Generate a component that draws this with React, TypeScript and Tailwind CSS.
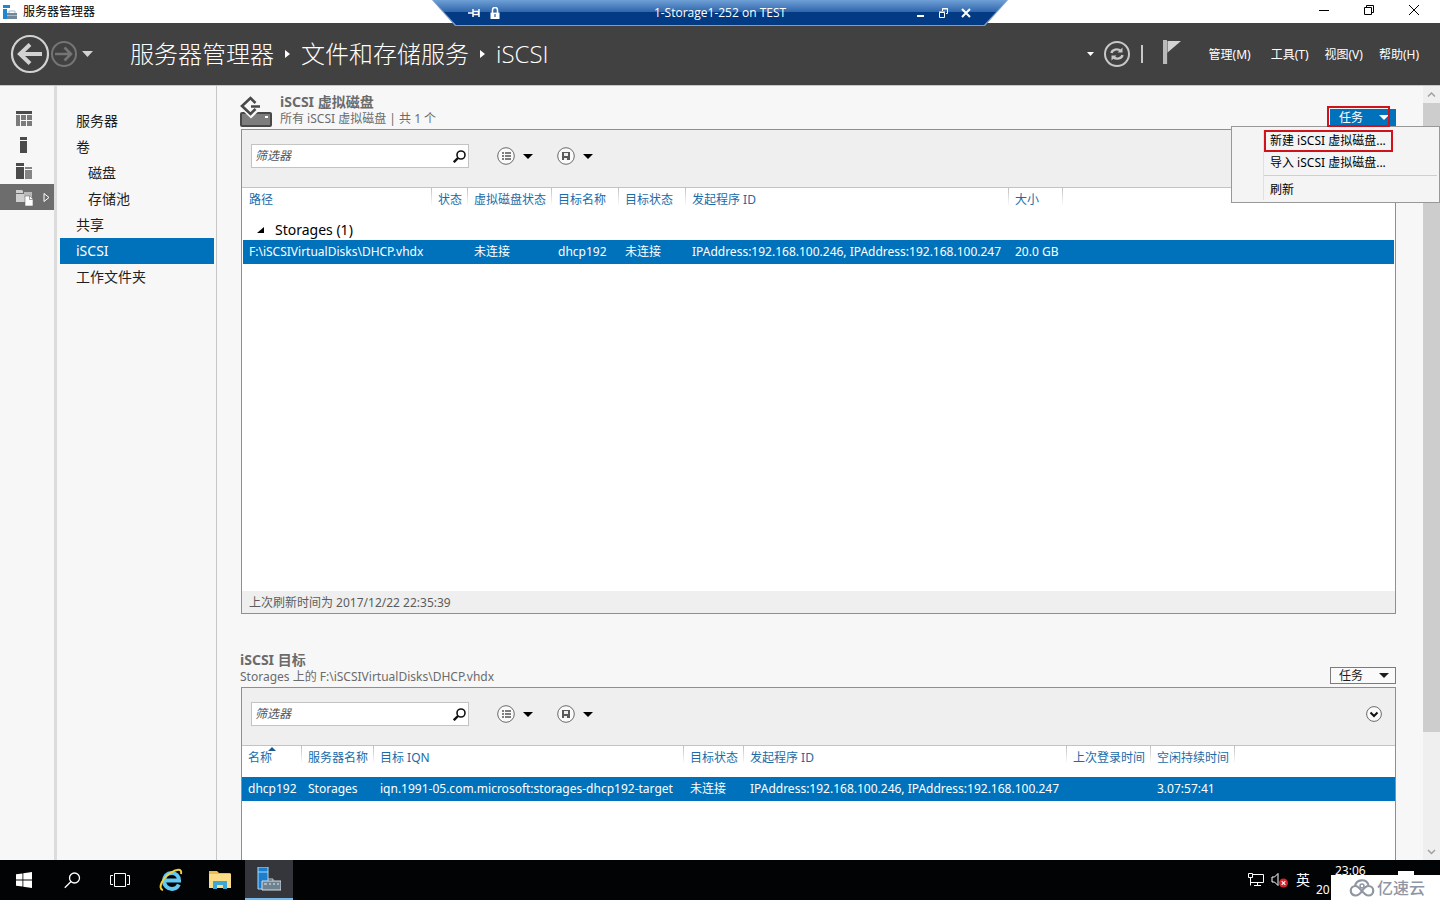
import type { ReactNode } from "react";

const FONT = "font-['Noto_Sans','Noto_Sans_CJK_SC',sans-serif]";
const LIGHT_FONT = "font-['Open_Sans','Noto_Sans_CJK_SC',sans-serif]";

function ServerGlyph({ className }: { className: string }) {
  return (
    <svg viewBox="0 0 24 24" className={className} aria-hidden="true">
      <path d="M1 0h10v22H1z" fill="#1b7fd0" stroke="#a9d8fa" />
      <path d="M1 5h10" stroke="#a9d8fa" />
      <path d="M11 12h5v3" fill="none" stroke="#c9d3da" />
      <path d="M5 14h19v9H5z" fill="#6f8291" stroke="#d5dde3" />
      <path d="M7 17h3M12 17h2M16 17h2M20 17h2" stroke="#e8eef2" />
    </svg>
  );
}

function TitleBar() {
  return (
    <div className="flex h-[23px] shrink-0 items-center bg-white pl-[3px] text-black">
      <svg viewBox="0 0 14 14" className="size-[14px]" aria-hidden="true">
        <path d="M0 0h7v3H0zM0 4h4v10H0z" fill="#1e86d2" />
        <path d="M4 8h10v6H4z" fill="#71889a" />
        <path d="M6 8V6h6v2M4 10.5h10" fill="none" stroke="#a9bac7" />
      </svg>
      <h1 className="ml-[6px] grow text-xs leading-4">服务器管理器</h1>
      <div className="mr-1 flex pb-1">
        <button aria-label="最小化" className="flex h-[19px] w-[45px] items-center justify-center">
          <svg viewBox="0 0 12 12" className="size-3"><path d="M1 6.500h10" stroke="#000" /></svg>
        </button>
        <button aria-label="还原" className="flex h-[19px] w-[45px] items-center justify-center">
          <svg viewBox="0 0 12 12" className="size-3" fill="none" stroke="#000">
            <path d="M1.500 3.500h7v7h-7zM3.500 3.500v-2h7v7h-2" />
          </svg>
        </button>
        <button aria-label="关闭" className="flex h-[19px] w-[45px] items-center justify-center">
          <svg viewBox="0 0 12 12" className="size-3"><path d="M1 1l10 10M11 1L1 11" stroke="#000" /></svg>
        </button>
      </div>
    </div>
  );
}

function ConnectionBar() {
  return (
    <div className="absolute top-0 left-1/2 z-20 h-[26px] w-[576px] -translate-x-1/2 bg-[#7d9cc9] pb-px [clip-path:polygon(0_0,100%_0,553px_100%,23px_100%)]">
      <div className="flex h-[25px] items-center bg-[linear-gradient(#6f9fd6,#2f66ab_12px,#023a83_12px,#023a83)] px-9 text-white [clip-path:polygon(1px_0,575px_0,552px_100%,24px_100%)]">
        <div className="flex w-20 items-center gap-[10px]">
          <button aria-label="固定">
            <svg viewBox="0 0 12 12" className="size-3" fill="none" stroke="#fff" strokeWidth="1.500">
              <path d="M0 6h5M5 2v8M5 4.500h5.500v3H5M11 2v8" />
            </svg>
          </button>
          <svg viewBox="0 0 10 12" className="h-3 w-[10px]" aria-hidden="true">
            <path d="M2.500 6V3a2.500 2.500 0 015 0v3" fill="none" stroke="#fff" strokeWidth="1.500" />
            <path d="M.5 5.500h9V12h-9z" fill="#fff" />
            <path d="M4.500 7h1v3h-1z" fill="#023a83" />
          </svg>
        </div>
        <p className={`grow text-center text-xs leading-4 ${LIGHT_FONT}`}>1-Storage1-252 on TEST</p>
        <div className="flex w-20 items-center justify-end gap-[11px]">
          <button aria-label="最小化连接">
            <svg viewBox="0 0 12 12" className="size-3"><path d="M3 9h7" stroke="#fff" strokeWidth="2" /></svg>
          </button>
          <button aria-label="还原连接">
            <svg viewBox="0 0 12 12" className="size-3" fill="none" stroke="#fff">
              <path d="M2.500 5.500h5v5h-5zM2 5h6M5.500 4V1.500h5v5H9M5 2h6" />
            </svg>
          </button>
          <button aria-label="断开连接">
            <svg viewBox="0 0 12 12" className="size-3"><path d="M2 2l8 8M10 2l-8 8" stroke="#fff" strokeWidth="2" /></svg>
          </button>
        </div>
      </div>
    </div>
  );
}

function Crumb() {
  return (
    <svg viewBox="0 0 5 8" className="h-2 w-[5px]" aria-hidden="true"><path d="M0 0l5 4-5 4z" fill="#fff" /></svg>
  );
}

function Header() {
  return (
    <header className="flex h-[62px] shrink-0 items-center bg-[#414141] pr-[21px] pl-[10px] text-white">
      <button aria-label="后退">
        <svg viewBox="0 0 40 40" className="size-10" fill="none" stroke="#d2d2d2">
          <circle cx="20" cy="20" r="18" strokeWidth="2.200" />
          <path d="M32 20H10M20 10.500L10 20l10 9.500" strokeWidth="4" />
        </svg>
      </button>
      <button aria-label="前进">
        <svg viewBox="0 0 28 28" className="size-7" fill="none" stroke="#757575">
          <circle cx="14" cy="14" r="12" strokeWidth="2" />
          <path d="M5 14h16M14.500 7.500L21 14l-6.500 6.500" strokeWidth="2.600" />
        </svg>
      </button>
      <button aria-label="历史记录" className="ml-1">
        <svg viewBox="0 0 12 6" className="h-[6px] w-3"><path d="M0 0h11L5.500 6z" fill="#d2d2d2" /></svg>
      </button>
      <nav aria-label="路径" className={`ml-9 flex grow items-center gap-[11px] text-2xl leading-8 font-light ${LIGHT_FONT}`}>
        <a href="#manager">服务器管理器</a>
        <Crumb />
        <a href="#files">文件和存储服务</a>
        <Crumb />
        <a href="#iscsi">iSCSI</a>
      </nav>
      <button aria-label="刷新选项">
        <svg viewBox="0 0 8 4" className="h-1 w-2"><path d="M0 0h7L3.500 4z" fill="#fff" /></svg>
      </button>
      <button aria-label="刷新" className="ml-2">
        <svg viewBox="0 0 28 28" className="size-7" fill="none" stroke="#c8c8c8">
          <circle cx="14" cy="14" r="12" strokeWidth="2" />
          <path d="M8.500 13c.5-3.500 6-5 9.500-2M19.500 15c-.5 3.500-6 5-9.500 2" strokeWidth="2.400" />
          <path d="M19.500 7.500v5h-5zM8.500 20.500v-5h5z" fill="#c8c8c8" stroke="none" />
        </svg>
      </button>
      <span className="ml-[10px] h-[18px] w-[2px] bg-[#c8c8c8]" />
      <button aria-label="通知" className="mb-1 ml-5">
        <svg viewBox="0 0 18 24" className="h-6 w-[18px]">
          <path d="M0 0h4v24H0z" fill="#b9b9b9" />
          <path d="M4 1h14L4 13z" fill="#d2d2d2" />
          <path d="M4.500 1v23" stroke="#5a5a5a" strokeWidth=".6" />
        </svg>
      </button>
      <div className="ml-7 flex gap-4 pt-px text-xs leading-4">
        <button className="mr-1">管理(M)</button>
        <button>工具(T)</button>
        <button>视图(V)</button>
        <button>帮助(H)</button>
      </div>
    </header>
  );
}

function Rail() {
  return (
    <nav aria-label="视图" className="w-[57px] shrink-0 border-r-[3px] border-[#dcdcdc] pt-5">
      <button aria-label="仪表板" className="flex h-[26px] w-full items-center pb-px pl-4">
        <svg viewBox="0 0 16 15" className="h-[15px] w-4">
          <path d="M0 0h16v3H0z" fill="#4b4b4b" />
          <path d="M0 4h4v11H0zM5 4h5v5H5zM11 4h5v5h-5zM5 10h5v5H5zM11 10h5v5h-5z" fill="#7b7b7b" />
        </svg>
      </button>
      <button aria-label="本地服务器" className="flex h-[26px] w-full items-center pl-5">
        <svg viewBox="0 0 7 16" className="h-4 w-[7px]" fill="#4b4b4b"><path d="M0 0h7v3H0zM0 4h7v12H0z" /></svg>
      </button>
      <button aria-label="所有服务器" className="flex h-[26px] w-full items-center pl-4">
        <svg viewBox="0 0 16 16" className="size-4">
          <path d="M0 0h8v3H0zM0 4h8v12H0z" fill="#4b4b4b" />
          <path d="M9 4h7v2H9zM9 7h7v9H9z" fill="#858585" />
        </svg>
      </button>
      <button aria-label="文件和存储服务" className="flex h-[26px] w-full items-center bg-[#6d6d6d] pl-4">
        <svg viewBox="0 0 17 17" className="size-[17px]">
          <path d="M0 1h6l1 1v2H0zM0 5h9v8H0z" fill="#cfcfcf" />
          <path d="M8 3h8v5H8z" fill="#b9b9b9" />
          <path d="M9 7h5l3 3v7H9z" fill="#fff" stroke="#6d6d6d" strokeWidth=".6" />
          <path d="M13.500 7v3.500H17" fill="none" stroke="#888" strokeWidth=".8" />
        </svg>
        <svg viewBox="0 0 7 11" className="ml-[10px] h-[11px] w-[7px]" fill="none" stroke="#fff">
          <path d="M1 1.500v8l5-4z" />
        </svg>
      </button>
    </nav>
  );
}

const NAV = [
  { label: "服务器" },
  { label: "卷" },
  { label: "磁盘", nested: true },
  { label: "存储池", nested: true },
  { label: "共享" },
  { label: "iSCSI", active: true },
  { label: "工作文件夹" },
];

function SideNav() {
  return (
    <nav aria-label="文件和存储服务" className="w-40 shrink-0 border-r border-[#c6c6c6] pt-[22px] pr-[2px] pl-[3px] text-sm">
      {NAV.map((n) => (
        <a
          key={n.label}
          href="#section"
          className={`block h-[26px] leading-[26px] ${n.nested ? "pl-7" : "pl-4"} ${n.active ? "bg-[#0072bc] text-white" : "text-[#1e1e1e]"}`}
        >
          {n.label}
        </a>
      ))}
    </nav>
  );
}

function Caret({ className = "" }: { className?: string }) {
  return (
    <svg viewBox="0 0 10 5" className={`h-[5px] w-[10px] ${className}`} aria-hidden="true">
      <path d="M0 0h10L5 5z" fill="currentColor" />
    </svg>
  );
}

function Toolbar({ id, children }: { id: string; children?: ReactNode }) {
  return (
    <div className="flex h-[58px] shrink-0 items-center border-b border-[#c3c3c3] bg-[#efefef] pr-[13px] pb-[5px] pl-[9px]">
      <div className="flex h-6 w-[218px] items-center border border-[#c3c3c3] bg-white pr-[2px] pl-[3px]">
        <input
          id={id}
          aria-label="筛选器"
          placeholder="筛选器"
          className="w-full min-w-0 grow bg-transparent text-xs leading-5 italic outline-none placeholder:text-[#555]"
        />
        <svg viewBox="0 0 13 13" className="size-[13px] shrink-0" fill="none" stroke="#111" aria-hidden="true">
          <circle cx="8" cy="5" r="4" strokeWidth="1.600" />
          <path d="M5 8L.8 12.200" strokeWidth="2.400" />
        </svg>
      </div>
      <button aria-label="列表选项" className="ml-7 flex items-center gap-2">
        <svg viewBox="0 0 18 18" className="size-[18px]">
          <circle cx="9" cy="9" r="8.300" fill="#fafafa" stroke="#6b6b6b" />
          <path d="M5 6h2M5 9h2M5 12h2M8 6h6M8 9h6M8 12h6" stroke="#555" strokeWidth="1.600" />
        </svg>
        <Caret />
      </button>
      <button aria-label="保存选项" className="ml-6 flex items-center gap-2">
        <svg viewBox="0 0 18 18" className="size-[18px]">
          <circle cx="9" cy="9" r="8.300" fill="#fafafa" stroke="#6b6b6b" />
          <path d="M5 5h8v8H5z" fill="#5a5a5a" />
          <path d="M7 6h4v3H7zM7 11h3v2H7z" fill="#eee" />
        </svg>
        <Caret />
      </button>
      <span className="grow" />
      {children}
    </div>
  );
}

const TH =
  "h-full bg-[linear-gradient(#c0c0c0,#fff)] bg-[length:1px_18px] bg-right-top bg-no-repeat pt-1 pl-[6px] text-left align-top font-normal leading-4 whitespace-nowrap";
const TD = "pl-[6px] leading-6 whitespace-nowrap";

function Columns({ widths }: { widths: number[] }) {
  return (
    <colgroup>
      {widths.map((w, i) => (
        <col key={i} style={{ width: w }} />
      ))}
      <col />
    </colgroup>
  );
}

function TaskMenu() {
  return (
    <div role="menu" className="absolute top-[17px] -right-11 z-10 w-[209px] border border-[#989898] bg-[#f4f4f4] pt-[3px] pb-[2px] pl-[31px] text-xs text-black">
      <div className="border-l border-[#e0e0e0] pr-[2px]">
        <button role="menuitem" className="block h-[22px] w-[129px] border-2 border-[#d0131b] pl-1 text-left leading-[18px] whitespace-nowrap">
          新建 iSCSI 虚拟磁盘...
        </button>
        <button role="menuitem" className="block h-[22px] w-full pl-[6px] text-left leading-5">
          导入 iSCSI 虚拟磁盘...
        </button>
        <div className="mt-px border-t border-[#cfcfcf]" />
        <button role="menuitem" className="block h-6 w-full pt-1 pl-[6px] text-left leading-5">刷新</button>
      </div>
    </div>
  );
}

function DisksPanel() {
  return (
    <section className="flex flex-col">
      <div className="flex h-[43px] items-end">
        <svg viewBox="0 0 32 32" className="-ml-px mb-px size-8" aria-hidden="true">
          <rect x="1" y="17" width="30" height="13" rx="1" fill="#7d7d7d" stroke="#484848" strokeWidth="2" />
          <path d="M25 20h3v2h-3z" fill="#fff" />
          <path d="M3 11.500L11 19l8-7.500" fill="none" stroke="#f7f7f7" strokeWidth="5" />
          <path d="M15.500 7L10.500 2 2 10l8.500 8 5-5M11 10.500h9" fill="none" stroke="#484848" strokeWidth="2.600" />
        </svg>
        <div className="ml-2 grow pb-[2px] text-[#6b6b6b]">
          <h2 className="text-sm leading-[18px] font-bold">iSCSI 虚拟磁盘</h2>
          <p className="text-xs leading-4">所有 iSCSI 虚拟磁盘 | 共 1 个</p>
        </div>
        <div className="relative mb-[3px] h-[17px] w-[66px]">
          <button className="flex size-full items-center justify-between bg-[#0072bc] pr-[7px] pl-[9px] text-xs leading-4 text-white">
            任务 <Caret />
          </button>
          <span className="pointer-events-none absolute -top-[3px] -left-[3px] z-20 h-[21px] w-[63px] border-2 border-[#d0131b]" />
          <TaskMenu />
        </div>
      </div>
      <div className="flex h-[485px] flex-col border border-[#8f8f8f] bg-white">
        <Toolbar id="disk-filter" />
        <div className="grow px-px">
          <table className="w-full table-fixed text-xs">
            <Columns widths={[189, 36, 84, 67, 67, 323, 54]} />
            <thead className="text-[#1a6ba8]">
              <tr className="h-[31px]">
                <th className={TH}>路径</th>
                <th className={TH}>状态</th>
                <th className={TH}>虚拟磁盘状态</th>
                <th className={TH}>目标名称</th>
                <th className={TH}>目标状态</th>
                <th className={TH}>发起程序 ID</th>
                <th className={TH}>大小</th>
                <td />
              </tr>
            </thead>
            <tbody>
              <tr className="h-[21px] text-sm text-black">
                <th colSpan={8} scope="rowgroup" className="pl-[14px] text-left leading-[21px] font-normal">
                  <span className="flex items-center gap-[10px]">
                    <svg viewBox="0 0 8 8" className="size-2" aria-hidden="true"><path d="M7 1v6H0z" /></svg>
                    Storages (1)
                  </span>
                </th>
              </tr>
              <tr className="h-6 bg-[#0072bc] text-white">
                <td className={TD}>F:\iSCSIVirtualDisks\DHCP.vhdx</td>
                <td />
                <td className={TD}>未连接</td>
                <td className={TD}>dhcp192</td>
                <td className={TD}>未连接</td>
                <td className={TD}>IPAddress:192.168.100.246, IPAddress:192.168.100.247</td>
                <td className={TD}>20.0 GB</td>
                <td />
              </tr>
            </tbody>
          </table>
        </div>
        <p className="h-[22px] shrink-0 bg-[#efefef] pl-[7px] text-xs leading-6 text-[#5c5c5c]">
          上次刷新时间为 2017/12/22 22:35:39
        </p>
      </div>
    </section>
  );
}

function TargetsPanel() {
  return (
    <section className="flex grow flex-col pt-[38px]">
      <div className="flex h-[35px] shrink-0 items-end">
        <div className="-ml-px grow pb-[2px] text-[#6b6b6b]">
          <h2 className="text-sm leading-[18px] font-bold">iSCSI 目标</h2>
          <p className="text-xs leading-4">Storages 上的 F:\iSCSIVirtualDisks\DHCP.vhdx</p>
        </div>
        <button className="mb-[3px] flex h-[17px] w-[66px] items-center justify-between border border-[#7c7c7c] bg-[#fafafa] pr-[6px] pl-2 text-xs leading-4 text-[#1e1e1e]">
          任务 <Caret />
        </button>
      </div>
      <div className="flex grow flex-col border border-b-0 border-[#8f8f8f] bg-white">
        <Toolbar id="target-filter">
          <button aria-label="展开">
            <svg viewBox="0 0 16 16" className="size-4" fill="none">
              <circle cx="8" cy="8" r="7.400" fill="#fafafa" stroke="#6b6b6b" />
              <path d="M4.500 6.500L8 10l3.500-3.500" stroke="#111" strokeWidth="2" />
            </svg>
          </button>
        </Toolbar>
        <table className="w-full table-fixed text-xs">
          <Columns widths={[60, 72, 310, 60, 323, 84, 84]} />
          <thead className="text-[#1a6ba8]">
            <tr className="h-[31px]">
              <th className={`${TH} relative`}>
                名称
                <svg viewBox="0 0 8 4" className="absolute top-px left-[26px] h-1 w-2" aria-hidden="true">
                  <path d="M0 4h8L4 0z" fill="#1a5c91" />
                </svg>
              </th>
              <th className={TH}>服务器名称</th>
              <th className={TH}>目标 IQN</th>
              <th className={TH}>目标状态</th>
              <th className={TH}>发起程序 ID</th>
              <th className={TH}>上次登录时间</th>
              <th className={TH}>空闲持续时间</th>
              <td />
            </tr>
          </thead>
          <tbody>
            <tr className="h-6 bg-[#0072bc] text-white">
              <td className={TD}>dhcp192</td>
              <td className={TD}>Storages</td>
              <td className={TD}>iqn.1991-05.com.microsoft:storages-dhcp192-target</td>
              <td className={TD}>未连接</td>
              <td className={TD}>IPAddress:192.168.100.246, IPAddress:192.168.100.247</td>
              <td />
              <td className={TD}>3.07:57:41</td>
              <td />
            </tr>
          </tbody>
        </table>
      </div>
    </section>
  );
}

function ScrollBar() {
  return (
    <div className="flex w-[17px] shrink-0 flex-col items-center bg-[#efefef]">
      <svg viewBox="0 0 17 17" className="size-[17px]" fill="none" aria-hidden="true">
        <path d="M5 10.500L8.500 7l3.500 3.500" stroke="#a0a0a0" strokeWidth="1.500" />
      </svg>
      <div className="w-full grow-[629] bg-[#cdcdcd]" />
      <div className="grow-[111]" />
      <svg viewBox="0 0 17 17" className="size-[17px]" fill="none" aria-hidden="true">
        <path d="M5 7l3.500 3.500L12 7" stroke="#a0a0a0" strokeWidth="1.500" />
      </svg>
    </div>
  );
}

function TaskBar() {
  return (
    <footer className="relative flex h-10 shrink-0 items-center bg-[#020305] text-white">
      <button aria-label="开始" className="flex w-12 justify-center">
        <svg viewBox="0 0 16 16" className="size-4" fill="#fff">
          <path d="M0 2.300l6.500-.9v6.100H0zM7.300 1.300L16 0v7.500H7.300zM0 8.400h6.500v6.200L0 13.700zM7.300 8.400H16V16l-8.700-1.300z" />
        </svg>
      </button>
      <button aria-label="搜索" className="flex w-12 justify-center">
        <svg viewBox="0 0 17 17" className="size-[17px]" fill="none" stroke="#fff" strokeWidth="1.300">
          <circle cx="10.500" cy="6" r="5" />
          <path d="M7 9.500L.8 15.700" />
        </svg>
      </button>
      <button aria-label="任务视图" className="flex w-12 justify-center">
        <svg viewBox="0 0 20 14" className="h-[14px] w-5" fill="none" stroke="#fff">
          <path d="M4.500.5h11v13h-11zM3 2.500H.5v9H3M17 2.500h2.500v9H17" />
        </svg>
      </button>
      <button aria-label="Internet Explorer" className="ml-[3px] flex w-12 justify-center">
        <svg viewBox="0 0 24 24" className="size-6" fill="none">
          <path d="M6 12.500h14c0-4.500-3-7.500-7.500-7.500S5 8.500 5 13s3.500 8 8 8c3.300 0 5.500-1.600 6.800-4.500" stroke="#62c9f4" strokeWidth="4" />
          <path d="M4 22C-2 20.500 4 9.500 12 4.500 17 1.300 23.500 0 22 6" stroke="#f5cf3b" strokeWidth="2" />
        </svg>
      </button>
      <button aria-label="文件资源管理器" className="ml-px flex w-12 justify-center">
        <svg viewBox="0 0 22 19" className="h-[19px] w-[22px]">
          <path d="M0 0h8l2 2h11.500v14H0z" fill="#e9bd54" />
          <path d="M0 3h22v14H0z" fill="#fbdc87" />
          <path d="M4 18v-8h14v8h-4v-4H8v4z" fill="#3ba7d6" />
        </svg>
      </button>
      <button aria-label="服务器管理器" className="ml-px flex h-full w-12 items-center justify-center border-b-2 border-[#76b9ed] bg-[#34363b]">
        <ServerGlyph className="size-6" />
      </button>
      <div className="grow" />
      <svg viewBox="0 0 16 14" className="h-[14px] w-4" fill="none" stroke="#fff" aria-hidden="true">
        <path d="M5 1.500h10.500v8H3M2.500 4.500v8M.500.500h4v4h-4zM9.500 9.500v3M6 12.500h7" />
      </svg>
      <svg viewBox="0 0 18 16" className="ml-[7px] h-4 w-[18px]" fill="none" aria-hidden="true">
        <path d="M1 5h2.500L7 1.500v12L3.500 10H1z" stroke="#fff" />
        <circle cx="12.500" cy="11" r="4.500" fill="#d9232b" />
        <path d="M10.700 9.200l3.600 3.600M14.300 9.200l-3.600 3.600" stroke="#fff" strokeWidth="1.200" />
      </svg>
      <button className="ml-[7px] text-sm leading-5">英</button>
      <div className="ml-[6px] w-[124px] self-stretch pt-[2px] text-xs">
        <p className="pl-[19px] leading-[18px]">23:06</p>
        <p className="leading-5">20</p>
      </div>
      <span className="absolute right-[26px] bottom-[25px] h-1 w-4 bg-white" />
      <div className="absolute right-0 bottom-0 flex h-[25px] w-[109px] items-center gap-[2px] bg-white pl-[18px] text-[#8f95a3]">
        <svg viewBox="0 0 26 20" className="h-5 w-[26px]" fill="none" stroke="currentColor" strokeWidth="2.200" aria-hidden="true">
          <path d="M6 8a7 7 0 0113.500-1" />
          <path d="M13 13c-2 3-4 4.500-6.500 4.500a4.700 4.700 0 010-9.500C11 8 14 17.500 19.500 17.500a4.700 4.700 0 000-9.500c-2.500 0-4.500 2-6.500 5z" />
          <circle cx="13" cy="8" r="2" strokeWidth="1.500" />
        </svg>
        <span className="text-base leading-6 font-medium">亿速云</span>
      </div>
    </footer>
  );
}

export default function App() {
  return (
    <div className={`relative flex h-screen flex-col overflow-hidden bg-[#f7f7f7] ${FONT}`}>
      <ConnectionBar />
      <TitleBar />
      <Header />
      <div className="flex min-h-0 grow border-t border-[#c8c8c8]">
        <Rail />
        <SideNav />
        <main className="flex min-w-0 grow flex-col pr-[27px] pl-6">
          <DisksPanel />
          <TargetsPanel />
        </main>
        <ScrollBar />
      </div>
      <TaskBar />
    </div>
  );
}
